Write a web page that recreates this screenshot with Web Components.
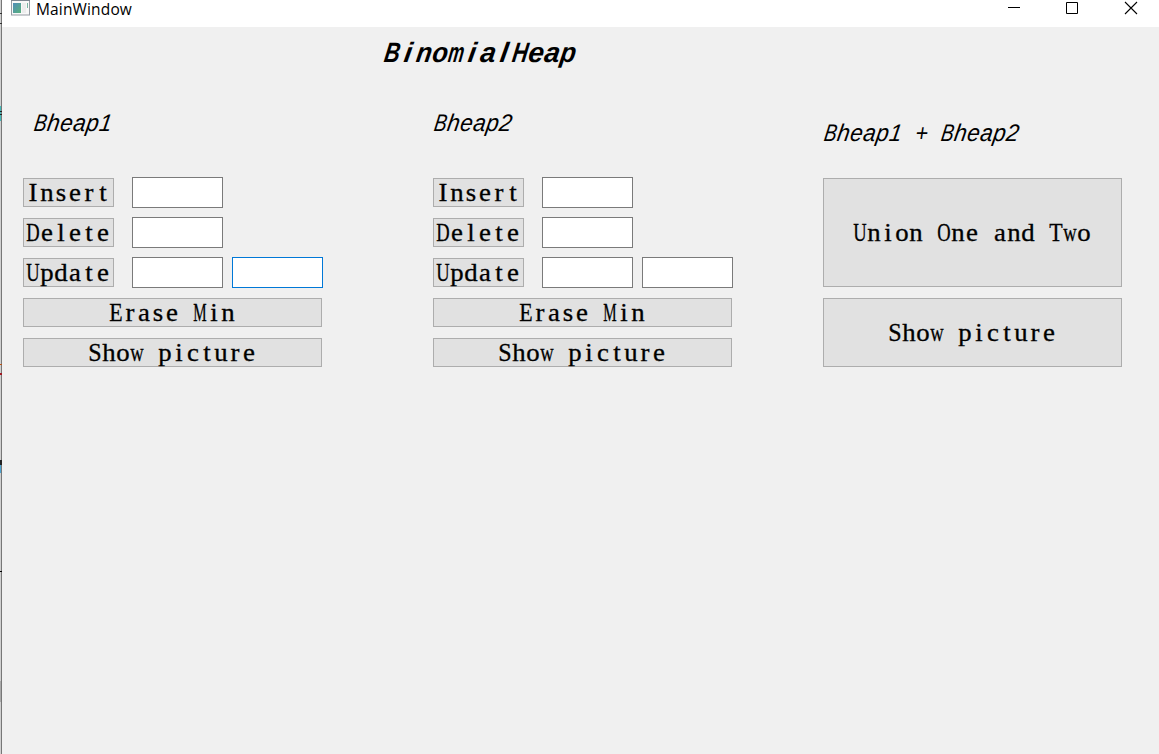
<!DOCTYPE html>
<html lang="en"><head><meta charset="utf-8"><title>MainWindow</title>
<style>html,body{margin:0;height:100%;overflow:hidden;background:#f0f0f0}</style></head>
<body><main-window></main-window>
<script>
const define = (name, html) => customElements.define(name, class extends HTMLElement {
  constructor() { super(); this.attachShadow({mode: 'open'}).innerHTML = html; }
});

// One line of text on a fixed pitch: each glyph is centred in its cell,
// and a glyph wider than its cell is condensed to fit.
const measure = document.createElement('canvas').getContext('2d');
function gridText(text, {cell, font, limit, height, baseline, skew = 0, stretch = 1, extra = ''}) {
  measure.font = font;
  const xs = [...text].map((c, i) => ((i + .5) * cell / stretch).toFixed(2)).join(' ');
  const max = limit / stretch;
  const body = [...text].map(c => measure.measureText(c).width > max
    ? `<tspan textLength="${max.toFixed(2)}" lengthAdjust="spacingAndGlyphs">${c}</tspan>` : c).join('');
  return `<svg width="${cell * text.length}" height="${height}" style="display:block;overflow:visible">
<text x="${xs}" y="0" transform="translate(0 ${baseline}) scale(${stretch} 1) skewX(${skew})" text-anchor="middle" xml:space="preserve" style='font:${font};white-space:pre;${extra}'>${body}</text></svg>`;
}

customElements.define('push-button', class extends HTMLElement {
  constructor() { super(); this.attachShadow({mode: 'open'}); }
  connectedCallback() {
    this.shadowRoot.innerHTML = `<style>
:host{display:flex;box-sizing:border-box;width:299px;height:29px;border:1px solid #adadad;background:#e1e1e1;align-items:center;justify-content:center}
:host([small]){width:91px}
svg{position:relative;left:-.5px}
</style>` + gridText(this.getAttribute('label'), {cell: 14, limit: 13.4, height: 27, baseline: 22, stretch: 1.05,
      font: '25.5px "Liberation Serif", serif', extra: 'stroke:#000;stroke-width:.3px'});
  }
});

customElements.define('text-label', class extends HTMLElement {
  constructor() { super(); this.attachShadow({mode: 'open'}); }
  connectedCallback() {
    const big = this.hasAttribute('title-size');
    this.shadowRoot.innerHTML = '<style>:host{display:block;height:30px}</style>' +
      gridText(this.getAttribute('label'), big
        ? {cell: 16, limit: 15.5, height: 30, baseline: 24, skew: -9, font: 'italic bold 28px "Liberation Sans", sans-serif'}
        : {cell: 13, limit: 12.5, height: 30, baseline: 23, skew: -9, font: 'italic 24px "Liberation Sans", sans-serif'});
  }
});

define('line-edit', `<style>
:host{display:block;box-sizing:border-box;width:91px;height:31px;border:1px solid #7a7a7a;background:#fff}
:host([focused]){border-color:#0078d7}
</style>`);

define('heap-panel', `<style>
:host{display:block;width:300px}
.caption{height:69px;box-sizing:border-box;padding-left:var(--caption-indent,0px)}
.row{display:flex;align-items:center;height:31px;margin-bottom:9px}
.row push-button{margin-right:18px;flex:none}
.row line-edit{margin-right:9px;flex:none}
.wide{padding-top:1px;display:grid;gap:11px}
</style>
<div class="caption"><slot></slot></div>
<div class="row"><push-button small label="Insert"></push-button><line-edit></line-edit></div>
<div class="row"><push-button small label="Delete"></push-button><line-edit></line-edit></div>
<div class="row"><push-button small label="Update"></push-button><line-edit></line-edit><line-edit id="last"></line-edit></div>
<div class="wide"><push-button label="Erase Min"></push-button><push-button label="Show picture"></push-button></div>`);

define('union-panel', `<style>
:host{display:grid;gap:11px;align-content:start;padding-top:10px}
.caption{height:49px}
.union{height:109px}.show{height:69px}
</style><div class="caption"><slot></slot></div>
<push-button class="union" label="Union One and Two"></push-button>
<push-button class="show" label="Show picture"></push-button>`);

define('title-bar', `<style>
:host{display:flex;height:27px;background:#fff;align-items:flex-start}
.icon{margin-left:9px;flex:none}
span{font:15.5px/18px "Open Sans","Noto Sans",sans-serif;color:#000;margin-left:6px;letter-spacing:.15px;flex:1}
.controls{flex:none}
</style>
<svg class="icon" width="19" height="16"><defs><linearGradient id="g" x2="1" y2="1"><stop stop-color="#508cb8"/><stop offset="1" stop-color="#58b27c"/></linearGradient></defs><rect x=".5" y=".5" width="18" height="14.5" fill="#f8f8f8" stroke="#969ba3"/><path d="M0 .5h19" stroke="#7d8691"/><rect x="2" y="3" width="8" height="10" fill="url(#g)"/><path d="M11 3h4v10h-4z" fill="#ededed"/><path d="M16.5 3v5" stroke="#79b5a2"/></svg>
<span>MainWindow</span>
<svg class="controls" width="151" height="20" fill="none" stroke="#000"><path d="M0 7.5h12M58.5 2.5h11v11h-11z"/><path d="m117 2 12 12m0-12-12 12" stroke-width="1.1"/></svg>`);

define('main-window', `<style>
:host{display:block;box-sizing:border-box;width:1159px;height:754px;padding-left:2px;
background:
linear-gradient(#222,#222) 0 111px/2px 1px no-repeat,
linear-gradient(#222,#222) 0 114px/2px 1px no-repeat,
linear-gradient(#43b9b8,#43b9b8) 0 106px/1px 15px no-repeat,
linear-gradient(#b75318,#b75318) 0 364px/2px 1px no-repeat,
linear-gradient(#a01822,#a01822) 0 373px/2px 2px no-repeat,
linear-gradient(#222,#222) 0 460px/2px 5px no-repeat,
linear-gradient(#4ba4d2,#4ba4d2) 0 465px/1px 8px no-repeat,
linear-gradient(#000,#000) 0 571px/2px 1px no-repeat,
linear-gradient(#aaa,#aaa) 0 681px/1px 21px no-repeat,
linear-gradient(#333,#333) 0 13px/2px 1px no-repeat,
linear-gradient(#333,#333) 0 23px/2px 1px no-repeat,
linear-gradient(90deg,#d0d0d0 0 1px,#777 1px 2px,#f0f0f0 2px)}
.title{padding:11px 0 0 381px;height:70px;box-sizing:border-box}
.panels{display:grid;grid-template-columns:410px 390px 300px;padding:11px 0 0 21px}
.first{--caption-indent:10px}
</style><title-bar></title-bar>
<div class="title"><text-label title-size label="BinomialHeap"></text-label></div>
<div class="panels"><heap-panel class="first"><text-label label="Bheap1"></text-label></heap-panel>
<heap-panel><text-label label="Bheap2"></text-label></heap-panel>
<union-panel><text-label label="Bheap1 + Bheap2"></text-label></union-panel></div>`);

document.querySelector('main-window').shadowRoot.querySelector('.first')
  .shadowRoot.querySelector('#last').toggleAttribute('focused', true);
</script></body></html>
